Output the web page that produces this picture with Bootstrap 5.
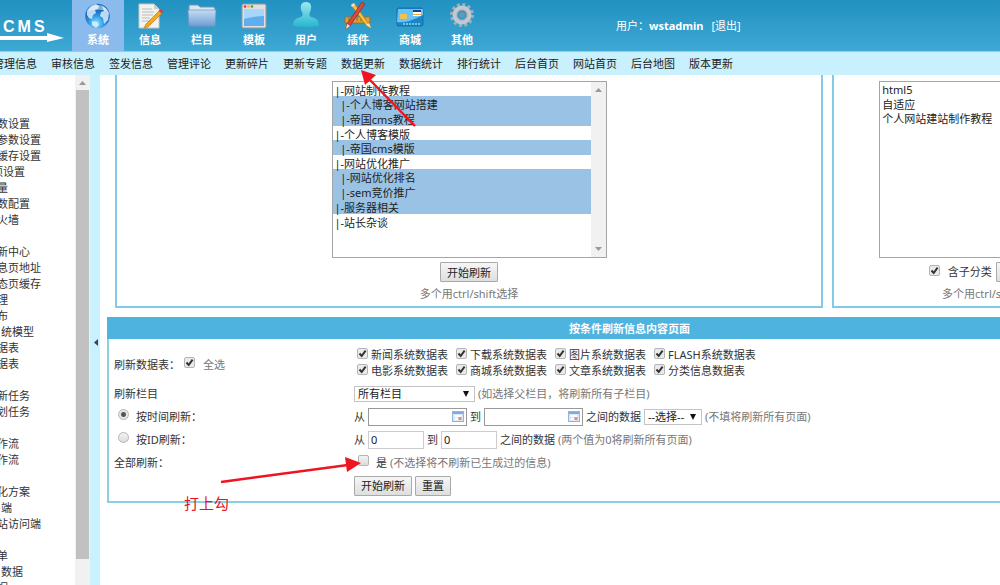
<!DOCTYPE html>
<html lang="zh-CN">
<head>
<meta charset="utf-8">
<meta name="viewport" content="width=device-width, initial-scale=1">
<title>CMS 后台管理</title>
<link href="https://cdn.jsdelivr.net/npm/bootstrap@5.3.0/dist/css/bootstrap.min.css" rel="stylesheet">
<style>
body{font-family:"Noto Sans","Noto Sans CJK SC",sans-serif;font-size:11px;line-height:16px;color:#333;background:#fff}
a{color:inherit;text-decoration:none}
input,select,button{font:inherit;color:#222}
.topbar{height:52px;background:linear-gradient(#2191c1,#3fa8d4);border-bottom:1px solid #86d3ee;color:#fff}
.brand{width:72px;padding:18px 0 0 3px;font:bold 16px/18px "Liberation Sans",sans-serif}
.brand-word{gap:3px}
.brand svg{margin:-3px 0 0 -3px}
.tab{width:52px;padding-top:2px;font-weight:700;color:#fff}
.tab svg{width:32px;height:30px}
.tab.active{background:#8bbaec}
.user{margin-left:128px}
.subnav{height:23px;background:#c8f0fd;gap:14px;color:#222;padding-top:1px}
.subnav a:first-child{margin-left:-7px}
.side{width:75px;padding-top:41px}
.side ul{margin:0 0 16px -3px}
.side .in{margin-left:4px}
.side .out{margin-left:-5px}
.track{width:15px;background:#f1f1f1}
.track svg{width:15px;height:15px}
.thumb{width:13px;height:92%;background:#c1c1c1}
.splitter{width:10px;background:#c8f2ff}
.content{padding-left:7px;min-width:0}
.panels{gap:9px;padding-left:8px}
.panel{border:2px solid #82cbe8;border-top:0;height:233px;padding-top:6px;flex:0 0 36%}
.panel.wide{flex-basis:80%}
.listbox{width:224px;height:177px;border:1px solid #a5a5a5}
.wide .listbox{width:275px}
.listbox select{border:0;background:#fff;padding:0;overflow:hidden;outline:0;min-width:0}
.listbox option{padding:0 2px;height:14px;min-height:0;line-height:13px;color:#222}
.listbox option:checked{height:15px;line-height:14px;background:#9ac2e4 linear-gradient(#9ac2e4,#9ac2e4);color:#222}
.btn-grey{height:20px;padding:0 6px;border:1px solid #aaa;border-radius:1px;background:linear-gradient(#f6f6f6,#dedede);line-height:17px;white-space:nowrap}
.hint{color:#777}
.sheet{width:117%;margin-top:9px;border:2px solid #8bcfe5;border-top:0}
.sheet h1{height:22px;margin:0 -2px;font-size:11px;line-height:23px;font-weight:700;background:#4fb3df;color:#fff}
.sheet fieldset{padding:8px 0 4px 5px}
.line{height:23px}
.line.tall{height:35px}
.name{width:240px;flex:none}
.gapped{gap:3px}
input[type=checkbox],input[type=radio]{appearance:none;margin:0;width:11px;height:11px;border:1px solid #b5b5b5;border-radius:2px;background:linear-gradient(#f3f3f3,#dcdcdc);flex:none;position:relative;top:-2px}
input[type=checkbox]:checked{background:#eaeaea url("data:image/svg+xml,%3Csvg xmlns='http://www.w3.org/2000/svg' viewBox='0 0 9 9'%3E%3Cpath d='M1.5 4.5L3.7 7L7.6 1.6' fill='none' stroke='%23333' stroke-width='2'/%3E%3C/svg%3E") center/9px 9px}
input[type=radio]{border-radius:50%}
input[type=radio]:checked{background:radial-gradient(circle,#555 0 2px,#e6e6e6 3px)}
.tables{display:grid;grid-template-columns:repeat(4,99px);padding-left:3px}
.tables label{gap:3px;white-space:nowrap}
.box{height:18px;border:1px solid #ccc;padding:0 2px;width:56px}
.box.date{width:99px;border-color:#999;background:#fff url("data:image/svg+xml,%3Csvg xmlns='http://www.w3.org/2000/svg' viewBox='0 0 12 11'%3E%3Crect x='.5' y='.5' width='11' height='10' fill='%23dbe8f8' stroke='%2393b2dc'/%3E%3Cpath d='M1 2h10' stroke='%2384a9dd' stroke-width='2'/%3E%3Cpath d='M3 5h6M3 8h3' stroke='%23fff' stroke-width='2'/%3E%3Cpath d='M6.500 6h3v3h-3z' fill='%23ec8b78'/%3E%3C/svg%3E") no-repeat right 2px center/12px 11px}
.drop{appearance:none;height:16px;border:1px solid #c4c4c4;padding:0 3px;width:121px;line-height:14px;background:#fff url("data:image/svg+xml,%3Csvg xmlns='http://www.w3.org/2000/svg' viewBox='0 0 6 6'%3E%3Cpath d='M0 0h6L3 6z' fill='%23111'/%3E%3C/svg%3E") no-repeat right 5px center/6px 6px}
.drop.short{width:58px}
.marks{left:0;top:0;pointer-events:none}
.note{left:184px;top:492px;font-size:15px;line-height:22px;color:#e5141f}
</style>
</head>
<body class="vh-100 overflow-hidden d-flex flex-column position-relative">
<header class="topbar d-flex flex-shrink-0">
  <div class="brand flex-shrink-0">
    <div class="brand-word d-flex"><span>C</span><span>M</span><span>S</span></div>
    <svg class="d-block" width="66" height="10" viewBox="0 0 66 10"><path d="M0 3h47V0l17 5-17 4V7H0z" fill="#fff"/></svg>
  </div>
  <nav class="d-flex text-center">
    <a class="tab active" href="#"><svg class="d-block mx-auto" viewBox="0 0 32 30"><defs><radialGradient id="gl" cx=".45" cy=".8"><stop offset="0" stop-color="#8feaff"/><stop offset=".6" stop-color="#2f9be6"/><stop offset="1" stop-color="#1f6fc0"/></radialGradient></defs><circle cx="15.500" cy="14" r="12.300" fill="url(#gl)"/><path d="M5 9q3-6 9-7l3 2-1 3-3 1 1 3-3 2-1 4-3-1-2-3zM20 4q5 2 7 7l-1 7-4 4-1-6-3-2 1-4 3-1zM10 19l5 1 2 3-3 3-4-3z" fill="#e1f3fd" opacity=".8"/><path d="M6 9q3-6 10-6t9 6q-10-3-19 0z" fill="#fff" opacity=".45"/></svg>系统</a>
    <a class="tab" href="#"><svg class="d-block mx-auto" viewBox="0 0 32 30"><path d="M5 2h15l5 5v19H5z" fill="#f2f2ef" stroke="#c4c8c8"/><path d="M20 2v5h5" fill="#ccc"/><path d="M8 7h10M8 10h12M8 13h11M8 16h8M8 19h7" stroke="#bbb"/><path d="M25 9l3 2-14 14-4 1 2-4z" fill="#f5a91e" stroke="#c57912" stroke-width=".7"/><path d="M25 9l2-2 2.500 2-2 2.500z" fill="#d94237"/></svg>信息</a>
    <a class="tab" href="#"><svg class="d-block mx-auto" viewBox="0 0 32 30"><defs><linearGradient id="fo" x2="0" y2="1"><stop stop-color="#c5dcf3"/><stop offset="1" stop-color="#6e9fd4"/></linearGradient></defs><path d="M3 4q0-1 1-1h8l2 2h13q2 0 2 2v17H3z" fill="#d9e5ef" stroke="#7198ba"/><path d="M2 8h28l-1 16H3z" fill="url(#fo)" stroke="#6b92bd" stroke-width=".7"/></svg>栏目</a>
    <a class="tab" href="#"><svg class="d-block mx-auto" viewBox="0 0 32 30"><rect x="4" y="2" width="24" height="24" rx="1.500" fill="#e3dfda" stroke="#8d9aa5"/><circle cx="7" cy="4.500" r="1.300" fill="#e33"/><circle cx="10.500" cy="4.500" r="1.300" fill="#eb3"/><circle cx="14" cy="4.500" r="1.300" fill="#4a3"/><path d="M6 7h20v17H6z" fill="#5faef0"/><path d="M6 7h20v7q-10 0-20 3z" fill="#a8d6fa"/></svg>模板</a>
    <a class="tab" href="#"><svg class="d-block mx-auto" viewBox="0 0 32 30"><defs><linearGradient id="us" x2="0" y2="1"><stop stop-color="#9be8ef"/><stop offset="1" stop-color="#27b6cf"/></linearGradient></defs><path d="M16 0c6 0 6 6 4 10-1 2-1 4 1 5 5 1 8 3 8 9q-13 2-26 0c0-6 3-8 8-9 2-1 2-3 1-5-2-4-2-10 4-10z" fill="url(#us)"/></svg>用户</a>
    <a class="tab" href="#"><svg class="d-block mx-auto" viewBox="0 0 32 30"><path d="M3 15h25v6H3z" fill="#dda237" stroke="#a46f1f"/><path d="M7 16v3m4-3v3m4-3v3m4-3v3m4-3v3" stroke="#8a611f"/><path d="M9 3l3-2 14 20 3 5-5-3z" fill="#f5c13a" stroke="#b67a18" stroke-width=".7"/><path d="M20 0l3 2L8 24l-4 3 1-5z" fill="#d64b3e" stroke="#8e2a27" stroke-width=".7"/><path d="M5 22l3 2-4 3zM24 23l3-2 2 5z" fill="#f3e2c0"/><path d="M9 3l3-2 1 2-3 2z" fill="#e9e1d5"/></svg>插件</a>
    <a class="tab" href="#"><svg class="d-block mx-auto" viewBox="0 0 32 30"><rect x="3" y="6" width="26" height="18" rx="1.500" fill="#1688ca" stroke="#08639e" stroke-width=".7"/><path d="M3 20q9 2 26-7V7H4z" fill="#6cc2f0"/><rect x="6" y="12" width="7" height="5" rx="1" fill="#f3c150"/><path d="M19 8h8v6h-8z" fill="#fff"/><path d="M19 8h8v2h-8z" fill="#203c8a"/><path d="M19 12h8v1h-8z" fill="#eda638"/><path d="M9 22h17" stroke="#dff4ff" stroke-dasharray="2 1"/></svg>商城</a>
    <a class="tab" href="#"><svg class="d-block mx-auto" viewBox="0 0 32 30"><circle cx="16" cy="13" r="10.500" fill="none" stroke="#a5adb8" stroke-width="3" stroke-dasharray="3 2.500"/><circle cx="16" cy="13" r="7" fill="none" stroke="#c3c9d0" stroke-width="5"/><circle cx="16" cy="13" r="5" fill="none" stroke="#8c97a5"/><circle cx="16" cy="13" r="2.500" fill="#4d9fc5" stroke="#8193a3"/></svg>其他</a>
  </nav>
  <div class="user d-flex align-items-center text-nowrap"><span>用户：</span><b>wstadmin</b><a class="ms-2" href="#">[退出]</a></div>
</header>
<nav class="subnav d-flex align-items-center text-nowrap flex-shrink-0 overflow-hidden">
  <a href="#">管理信息</a><a href="#">审核信息</a><a href="#">签发信息</a><a href="#">管理评论</a><a href="#">更新碎片</a><a href="#">更新专题</a><a href="#">数据更新</a><a href="#">数据统计</a><a href="#">排行统计</a><a href="#">后台首页</a><a href="#">网站首页</a><a href="#">后台地图</a><a href="#">版本更新</a>
</nav>
<div class="d-flex flex-grow-1 overflow-hidden">
  <aside class="side flex-shrink-0 overflow-hidden text-nowrap">
    <ul class="list-unstyled"><li><a href="#">数设置</a></li><li><a href="#">参数设置</a></li><li><a href="#">缓存设置</a></li><li class="out"><a href="#">项设置</a></li><li><a href="#">量</a></li><li><a href="#">数配置</a></li><li><a href="#">火墙</a></li></ul>
    <ul class="list-unstyled"><li><a href="#">新中心</a></li><li><a href="#">息页地址</a></li><li><a href="#">态页缓存</a></li><li><a href="#">理</a></li><li><a href="#">布</a></li><li class="in"><a href="#">统模型</a></li><li><a href="#">据表</a></li><li><a href="#">据表</a></li></ul>
    <ul class="list-unstyled"><li><a href="#">新任务</a></li><li><a href="#">划任务</a></li></ul>
    <ul class="list-unstyled"><li><a href="#">作流</a></li><li><a href="#">作流</a></li></ul>
    <ul class="list-unstyled"><li><a href="#">化方案</a></li><li class="in"><a href="#">端</a></li><li><a href="#">站访问端</a></li></ul>
    <ul class="list-unstyled"><li><a href="#">单</a></li><li class="in"><a href="#">数据</a></li><li><a href="#">据</a></li></ul>
  </aside>
  <div class="track flex-shrink-0"><svg class="d-block" viewBox="0 0 15 15"><path d="M4 10l3.500-4L11 10z" fill="#999"/></svg><div class="thumb mx-auto"></div></div>
  <div class="splitter flex-shrink-0 d-flex align-items-center"><svg class="mt-4 ms-1" width="4" height="7" viewBox="0 0 4 7"><path d="M0 3.500L4 0v7z" fill="#345"/></svg></div>
  <main class="content flex-grow-1 overflow-hidden">
    <div class="panels d-flex">
      <section class="panel wide d-flex flex-column align-items-center">
        <div class="listbox d-flex">
          <select multiple size="10" class="flex-grow-1 h-100" aria-label="栏目">
            <option>|-网站制作教程</option><option selected>&nbsp;&nbsp;|-个人博客网站搭建</option><option selected>&nbsp;&nbsp;|-帝国cms教程</option><option>|-个人博客模版</option><option selected>&nbsp;&nbsp;|-帝国cms模版</option><option>|-网站优化推广</option><option selected>&nbsp;&nbsp;|-网站优化排名</option><option selected>&nbsp;&nbsp;|-sem竞价推广</option><option selected>|-服务器相关</option><option>|-站长杂谈</option>
          </select>
          <div class="track d-flex flex-column justify-content-between"><svg viewBox="0 0 15 15"><path d="M4 10l3.500-4L11 10z" fill="#999"/></svg><svg viewBox="0 0 15 15"><path d="M4 5l3.500 4L11 5z" fill="#999"/></svg></div>
        </div>
        <button class="btn-grey mt-1" type="button">开始刷新</button>
        <div class="hint mt-1">多个用ctrl/shift选择</div>
      </section>
      <section class="panel d-flex flex-column align-items-center">
        <div class="listbox d-flex">
          <select multiple size="10" class="flex-grow-1 h-100" aria-label="标题分类"><option>html5</option><option>自适应</option><option>个人网站建站制作教程</option></select>
        </div>
        <div class="d-flex align-items-center mt-1"><label class="d-flex align-items-center gap-2 me-1"><input type="checkbox" checked>含子分类</label><button class="btn-grey" type="button">开始刷新</button></div>
        <div class="hint mt-1">多个用ctrl/shift选择</div>
      </section>
    </div>
    <form class="sheet text-nowrap">
      <h1 class="text-center">按条件刷新信息内容页面</h1>
      <fieldset>
        <div class="line tall d-flex">
          <div class="name d-flex align-items-center"><span>刷新数据表：</span><label class="d-flex align-items-center gap-2 hint ms-1"><input type="checkbox" checked>全选</label></div>
          <div class="tables align-content-start">
            <label class="d-flex align-items-center"><input type="checkbox" checked>新闻系统数据表</label>
            <label class="d-flex align-items-center"><input type="checkbox" checked>下载系统数据表</label>
            <label class="d-flex align-items-center"><input type="checkbox" checked>图片系统数据表</label>
            <label class="d-flex align-items-center"><input type="checkbox" checked>FLASH系统数据表</label>
            <label class="d-flex align-items-center"><input type="checkbox" checked>电影系统数据表</label>
            <label class="d-flex align-items-center"><input type="checkbox" checked>商城系统数据表</label>
            <label class="d-flex align-items-center"><input type="checkbox" checked>文章系统数据表</label>
            <label class="d-flex align-items-center"><input type="checkbox" checked>分类信息数据表</label>
          </div>
        </div>
        <div class="line d-flex align-items-center">
          <label class="name" for="col">刷新栏目</label>
          <div class="d-flex align-items-center gapped"><select class="drop" id="col"><option>所有栏目</option></select><span class="hint">(如选择父栏目，将刷新所有子栏目)</span></div>
        </div>
        <div class="line d-flex align-items-center">
          <div class="name"><label class="d-flex align-items-center gapped ps-1"><input class="me-1" type="radio" name="by" checked>按时间刷新：</label></div>
          <div class="d-flex align-items-center gapped"><label for="d1">从</label><input class="box date" id="d1" type="text"><label for="d2">到</label><input class="box date" id="d2" type="text"><label for="pick">之间的数据</label><select class="drop short" id="pick"><option>--选择--</option></select><span class="hint">(不填将刷新所有页面)</span></div>
        </div>
        <div class="line d-flex align-items-center">
          <div class="name"><label class="d-flex align-items-center gapped ps-1"><input class="me-1" type="radio" name="by">按ID刷新：</label></div>
          <div class="d-flex align-items-center gapped"><label for="n1">从</label><input class="box" id="n1" type="text" value="0"><label for="n2">到</label><input class="box" id="n2" type="text" value="0"><span>之间的数据</span><span class="hint">(两个值为0将刷新所有页面)</span></div>
        </div>
        <div class="line d-flex align-items-center">
          <label class="name" for="all">全部刷新：</label>
          <div class="d-flex align-items-center gapped"><input class="mx-1" type="checkbox" id="all"><label for="all">是</label><span class="hint">(不选择将不刷新已生成过的信息)</span></div>
        </div>
        <div class="line d-flex align-items-center">
          <div class="name"></div>
          <div class="d-flex gapped"><button class="btn-grey" type="button">开始刷新</button><button class="btn-grey" type="reset">重置</button></div>
        </div>
      </fieldset>
    </form>
  </main>
</div>
<!-- 操作标注 -->
<svg class="marks position-absolute" width="440" height="500" viewBox="0 0 440 500" fill="#ee1520" stroke="#ee1520"><path d="M415 126L370 80M221 482L348 465" stroke-width="2.500"/><path d="M361 70l15 5-11 10zM361 463l-16-6 2 15z" stroke="none"/></svg>
<div class="note position-absolute">打上勾</div>
<script src="https://cdn.jsdelivr.net/npm/bootstrap@5.3.0/dist/js/bootstrap.bundle.min.js"></script>
</body>
</html>
